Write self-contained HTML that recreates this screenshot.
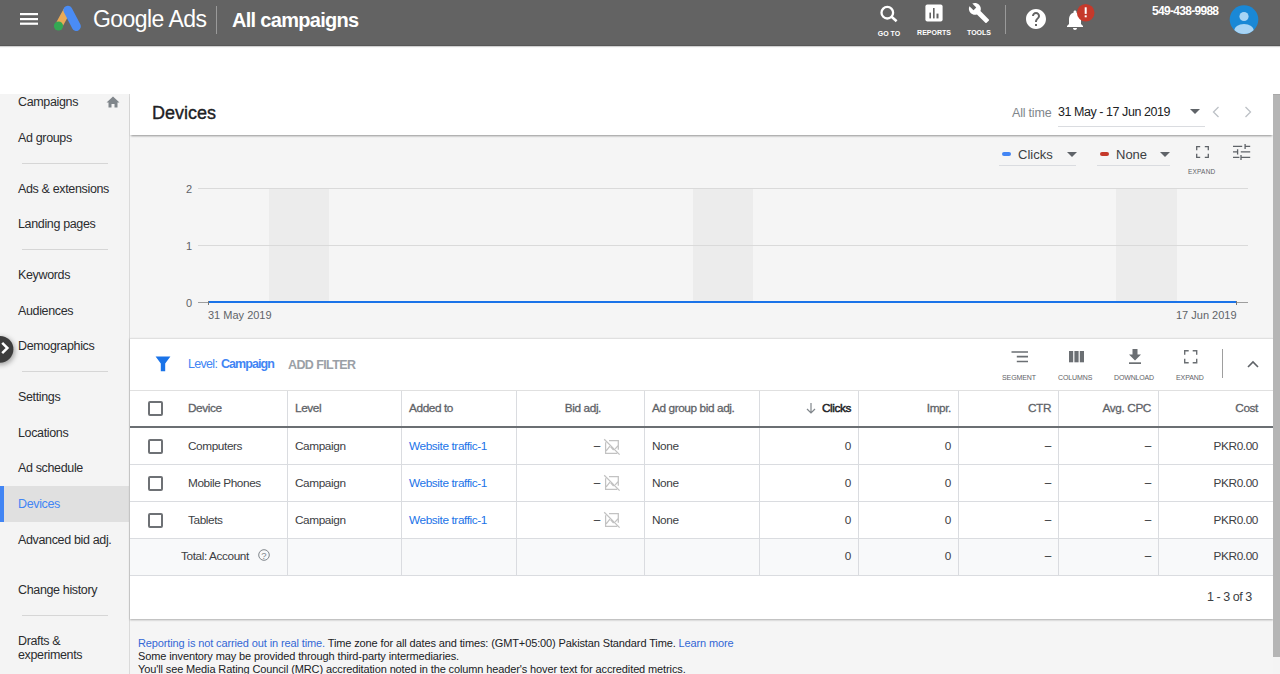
<!DOCTYPE html>
<html><head><meta charset="utf-8">
<style>
*{box-sizing:border-box;margin:0;padding:0}
html,body{width:1280px;height:674px;overflow:hidden;background:#fff;font-family:"Liberation Sans",sans-serif;color:#202124}
.abs{position:absolute}
#top{position:absolute;left:0;top:0;width:1280px;height:46px;background:#636363;color:#fff;border-bottom:1px solid #575757;box-shadow:0 1px 1px rgba(0,0,0,.18);z-index:2}
#side{position:absolute;left:0;top:94px;width:130px;height:580px;background:#f4f4f4;border-right:1px solid #dadada;overflow:hidden}
.nav{position:absolute;left:18px;font-size:12.5px;letter-spacing:-0.35px;color:#2b2c2f;white-space:nowrap}
.sep{position:absolute;left:22px;width:86px;height:1px;background:#d6d6d6}
#main{position:absolute;left:130px;top:94px;width:1143px;height:580px;background:#f4f4f4;overflow:hidden}
#scroll{position:absolute;left:1273px;top:94px;width:7px;height:563px;background:#b5b5b5;border-top:1px solid #a9a9a9}
</style></head><body>
<div id="top">
  <svg class="abs" style="left:20px;top:12px" width="18" height="14" viewBox="0 0 18 14"><rect x="0" y="1" width="18" height="2.2" fill="#fff"/><rect x="0" y="6" width="18" height="2.2" fill="#fff"/><rect x="0" y="10.6" width="18" height="2.2" fill="#fff"/></svg>
  <svg class="abs" style="left:52px;top:5px" width="30" height="27" viewBox="0 0 30 27">
    <line x1="14.8" y1="6" x2="7" y2="20.3" stroke="#e8aa58" stroke-width="7.6" stroke-linecap="round"/>
    <line x1="15.9" y1="5.2" x2="24.3" y2="21.4" stroke="#4a8cf5" stroke-width="9" stroke-linecap="round"/>
    <circle cx="6.5" cy="21" r="4.6" fill="#34a853"/>
  </svg>
  <div class="abs" style="left:93px;top:6px;font-size:23px;color:#fff;letter-spacing:-0.55px">Google Ads</div>
  <div class="abs" style="left:216px;top:6px;width:1px;height:28px;background:#9a9a9a"></div>
  <div class="abs" style="left:232px;top:8.7px;font-size:20px;font-weight:bold;color:#fff;letter-spacing:-0.7px">All campaigns</div>
  <svg class="abs" style="left:878px;top:3px" width="22" height="21" viewBox="0 0 22 21"><circle cx="9.3" cy="9.7" r="5.8" stroke="#fff" stroke-width="2.3" fill="none"/><path d="M13.3 13.6L18.6 18.2" stroke="#fff" stroke-width="2.6"/></svg>
  <div class="abs" style="left:876px;top:30px;width:26px;text-align:center;font-size:7px;font-weight:bold;color:#fff">GO TO</div>
  <svg class="abs" style="left:925px;top:4px" width="18" height="18" viewBox="0 0 18 18"><rect x="0.4" y="0.6" width="17.2" height="16.8" rx="2" fill="#fff"/><rect x="4.4" y="8.6" width="1.6" height="5.8" fill="#636363"/><rect x="8" y="4" width="1.6" height="10.4" fill="#636363"/><rect x="11.5" y="9.6" width="2" height="4.8" fill="#636363"/></svg>
  <div class="abs" style="left:914px;top:29px;width:40px;text-align:center;font-size:7px;font-weight:bold;color:#fff">REPORTS</div>
  <svg class="abs" style="left:968px;top:1.5px" width="22" height="22" viewBox="0 0 24 24"><path d="M22.7 19l-9.1-9.1c.9-2.3.4-5-1.5-6.9-2-2-5-2.4-7.4-1.3L9 6 6 9 1.6 4.7C.4 7.1.9 10.1 2.9 12.1c1.9 1.9 4.6 2.4 6.9 1.5l9.1 9.1c.4.4 1 .4 1.4 0l2.3-2.3c.5-.4.5-1.1.1-1.4z" fill="#fff"/></svg>
  <div class="abs" style="left:961px;top:29px;width:36px;text-align:center;font-size:7px;font-weight:bold;color:#fff">TOOLS</div>
  <div class="abs" style="left:1005px;top:5px;width:1px;height:29px;background:#9a9a9a"></div>
  <svg class="abs" style="left:1024px;top:6.7px" width="24" height="24" viewBox="0 0 24 24"><path d="M12 2C6.48 2 2 6.48 2 12s4.48 10 10 10 10-4.48 10-10S17.52 2 12 2zm1 17h-2v-2h2v2zm2.07-7.75l-.9.92C13.45 12.9 13 13.5 13 15h-2v-.5c0-1.1.45-2.1 1.17-2.83l1.24-1.26c.37-.36.59-.86.59-1.41 0-1.1-.9-2-2-2s-2 .9-2 2H8c0-2.21 1.79-4 4-4s4 1.79 4 4c0 .88-.36 1.68-.93 2.25z" fill="#fff"/></svg>
  <svg class="abs" style="left:1063px;top:7.5px" width="24" height="24" viewBox="0 0 24 24"><path d="M12 22c1.1 0 2-.9 2-2h-4c0 1.1.89 2 2 2zm6-6v-5c0-3.07-1.64-5.64-4.5-6.32V4c0-.83-.67-1.5-1.5-1.5s-1.5.67-1.5 1.5v.68C7.63 5.36 6 7.92 6 11v5l-2 2v1h16v-1l-2-2z" fill="#fff"/></svg>
  <svg class="abs" style="left:1076px;top:3px" width="20" height="20" viewBox="0 0 20 20"><circle cx="9.7" cy="9.7" r="8.8" fill="#c5392b"/><rect x="8.7" y="4.3" width="2" height="6.6" fill="#fff"/><rect x="8.7" y="12.3" width="2" height="2" fill="#fff"/></svg>
  <div class="abs" style="left:1152px;top:4px;font-size:12px;font-weight:bold;color:#fff;letter-spacing:-0.7px">549-438-9988</div>
  <svg class="abs" style="left:1229px;top:5px" width="30" height="30" viewBox="0 0 30 30"><defs><clipPath id="av"><circle cx="15" cy="14.6" r="14.3"/></clipPath></defs><circle cx="15" cy="14.6" r="14.3" fill="#1a88d6"/><g clip-path="url(#av)"><circle cx="15" cy="11.5" r="4.6" fill="#a8d4f5"/><ellipse cx="15" cy="26" rx="10" ry="7" fill="#a8d4f5"/></g></svg>
</div>

<div id="side">
  <div class="nav" style="top:1px">Campaigns</div>
  <svg class="abs" style="left:106px;top:2px" width="14" height="12" viewBox="0 0 14 12"><path d="M7 0.5L0.5 6.5H2.5V11.5H5.5V8H8.5V11.5H11.5V6.5H13.5Z" fill="#80868b"/></svg>
  <div class="nav" style="top:37px">Ad groups</div>
  <div class="sep" style="top:69px"></div>
  <div class="nav" style="top:88px">Ads &amp; extensions</div>
  <div class="nav" style="top:123px">Landing pages</div>
  <div class="sep" style="top:155px"></div>
  <div class="nav" style="top:174px">Keywords</div>
  <div class="nav" style="top:210px">Audiences</div>
  <div class="nav" style="top:245px">Demographics</div>
  <div class="sep" style="top:277px"></div>
  <div class="nav" style="top:296px">Settings</div>
  <div class="nav" style="top:332px">Locations</div>
  <div class="nav" style="top:367px">Ad schedule</div>
  <div class="abs" style="left:0;top:392px;width:129px;height:36px;background:#e0e0e0"></div>
  <div class="abs" style="left:0;top:392px;width:4px;height:36px;background:#4285f4"></div>
  <div class="nav" style="top:403px;color:#4285f4">Devices</div>
  <div class="nav" style="top:439px">Advanced bid adj.</div>
  <div class="nav" style="top:489px">Change history</div>
  <div class="sep" style="top:521px"></div>
  <div class="nav" style="top:540px;line-height:14px">Drafts &amp;<br>experiments</div>
</div>

<!-- header -->
<div class="abs" style="left:130px;top:94px;width:1143px;height:580px;background:#f5f5f5"></div>
<div class="abs" style="left:130px;top:94px;width:1143px;height:41px;background:#fff;box-shadow:0 2px 2px -1px rgba(0,0,0,.4)"></div>
<div class="abs" style="left:152px;top:103px;font-size:18px;color:#202124;-webkit-text-stroke:0.35px #202124">Devices</div>
<div class="abs" style="left:1012px;top:105.5px;font-size:12.5px;letter-spacing:-0.2px;color:#80868b">All time</div>
<div class="abs" style="left:1058px;top:105px;font-size:12.5px;letter-spacing:-0.45px;color:#202124">31 May - 17 Jun 2019</div>
<div class="abs" style="left:1058px;top:126px;width:147px;height:1px;background:#dadce0"></div>
<svg class="abs" style="left:1190px;top:109px" width="10" height="5"><path d="M0 0L10 0L5 5Z" fill="#5f6368"/></svg>
<svg class="abs" style="left:1212px;top:106px" width="8" height="12"><path d="M6.5 1L1.5 6L6.5 11" stroke="#bdc1c6" stroke-width="1.3" fill="none"/></svg>
<svg class="abs" style="left:1244px;top:106px" width="8" height="12"><path d="M1.5 1L6.5 6L1.5 11" stroke="#bdc1c6" stroke-width="1.3" fill="none"/></svg>

<!-- chart controls -->
<div class="abs" style="left:1002px;top:152px;width:9px;height:4px;border-radius:2px;background:#4285f4"></div>
<div class="abs" style="left:1018px;top:147px;font-size:13px;color:#3c4043">Clicks</div>
<svg class="abs" style="left:1067px;top:152px" width="10" height="5"><path d="M0 0L10 0L5 5Z" fill="#5f6368"/></svg>
<div class="abs" style="left:999px;top:165px;width:77px;height:1px;background:#dadce0"></div>
<div class="abs" style="left:1100px;top:152px;width:9px;height:4px;border-radius:2px;background:#c5392b"></div>
<div class="abs" style="left:1116px;top:147px;font-size:13px;color:#3c4043">None</div>
<svg class="abs" style="left:1160px;top:152px" width="10" height="5"><path d="M0 0L10 0L5 5Z" fill="#5f6368"/></svg>
<div class="abs" style="left:1097px;top:165px;width:73px;height:1px;background:#dadce0"></div>
<svg class="abs" style="left:1196px;top:146px" width="13" height="12" viewBox="0 0 13 12"><path d="M0.7 4.2V0.7H4.2M8.8 0.7H12.3V4.2M12.3 7.8V11.3H8.8M4.2 11.3H0.7V7.8" stroke="#5f6368" stroke-width="1.3" fill="none"/></svg>
<div class="abs" style="left:1188px;top:168px;font-size:6.5px;color:#5f6368;letter-spacing:.2px">EXPAND</div>
<svg class="abs" style="left:1233px;top:144px" width="18" height="17" viewBox="0 0 18 17"><path d="M0 2.4H9.2M11.5 2.4H17.2M0 7.9H5.2M7.8 7.9H17.2M0 13.4H6.4M8.6 13.4H17.2M12.1 0V5M4.6 5.2V10.6M8 11V16" stroke="#5f6368" stroke-width="1.3" fill="none"/></svg>

<!-- chart -->
<div class="abs" style="left:269px;top:189px;width:60px;height:112px;background:#ececec"></div>
<div class="abs" style="left:693px;top:189px;width:60px;height:112px;background:#ececec"></div>
<div class="abs" style="left:1116px;top:189px;width:61px;height:112px;background:#ececec"></div>
<div class="abs" style="left:198px;top:188px;width:1050px;height:1px;background:#dadada"></div>
<div class="abs" style="left:198px;top:245px;width:1050px;height:1px;background:#dadada"></div>
<div class="abs" style="left:198px;top:302px;width:1050px;height:1px;background:#9e9e9e"></div>
<div class="abs" style="left:208px;top:301px;width:1029px;height:2px;background:#1a73e8"></div>
<div class="abs" style="left:208px;top:301px;width:1px;height:4px;background:#777"></div>
<div class="abs" style="left:1236px;top:301px;width:1px;height:4px;background:#777"></div>
<div class="abs" style="left:186px;top:183px;font-size:11px;color:#5f6368">2</div>
<div class="abs" style="left:186px;top:240px;font-size:11px;color:#5f6368">1</div>
<div class="abs" style="left:186px;top:297px;font-size:11px;color:#5f6368">0</div>
<div class="abs" style="left:208px;top:309px;font-size:11px;color:#5f6368">31 May 2019</div>
<div class="abs" style="left:1176px;top:309px;font-size:11px;color:#5f6368">17 Jun 2019</div>

<!-- table card -->
<div class="abs" style="left:130px;top:338px;width:1143px;height:281px;background:#fff;border-top:1px solid #e0e0e0;box-shadow:0 1px 2px rgba(0,0,0,.3)"></div>
<svg class="abs" style="left:155px;top:356px" width="16" height="16" viewBox="0 0 16 16"><path d="M0.6 0.6H15.4L10.2 7.6V15.2H5.8V7.6Z" fill="#1a73e8"/></svg>
<div class="abs" style="left:188px;top:357px;font-size:12.5px;letter-spacing:-0.7px;color:#4285f4">Level:</div>
<div class="abs" style="left:221px;top:357px;font-size:12.5px;letter-spacing:-0.95px;font-weight:bold;color:#4285f4">Campaign</div>
<div class="abs" style="left:288px;top:358px;font-size:12.5px;letter-spacing:-0.6px;color:#9aa0a6;font-weight:bold">ADD FILTER</div>
<svg class="abs" style="left:1011px;top:350px" width="18" height="14" viewBox="0 0 18 14"><path d="M0.5 2H17M5.8 6.7H17M5.8 11.5H17" stroke="#6b6f73" stroke-width="1.7" fill="none"/></svg>
<div class="abs" style="left:1002px;top:374px;font-size:7px;letter-spacing:-0.1px;color:#5f6368">SEGMENT</div>
<svg class="abs" style="left:1069px;top:350px" width="16" height="13" viewBox="0 0 16 13"><rect x="0" y="1" width="4.2" height="11.3" fill="#6b6f73"/><rect x="5.4" y="1" width="4.2" height="11.3" fill="#6b6f73"/><rect x="10.8" y="1" width="4.2" height="11.3" fill="#6b6f73"/></svg>
<div class="abs" style="left:1058px;top:374px;font-size:7px;letter-spacing:-0.1px;color:#5f6368">COLUMNS</div>
<svg class="abs" style="left:1128px;top:348px" width="14" height="17" viewBox="0 0 14 17"><path d="M4.5 1H9.5V6.5H13L7 12.6L1 6.5H4.5Z" fill="#6b6f73"/><rect x="1" y="14.3" width="12" height="1.7" fill="#6b6f73"/></svg>
<div class="abs" style="left:1114px;top:374px;font-size:7px;letter-spacing:-0.15px;color:#5f6368">DOWNLOAD</div>
<svg class="abs" style="left:1184px;top:350px" width="14" height="14" viewBox="0 0 14 14"><path d="M0.7 4.7V0.7H4.7M8.7 0.7H12.7V4.7M12.7 8.7V12.7H8.7M4.7 12.7H0.7V8.7" stroke="#6b6f73" stroke-width="1.4" fill="none"/></svg>
<div class="abs" style="left:1176px;top:374px;font-size:7px;letter-spacing:-0.1px;color:#5f6368">EXPAND</div>

<div class="abs" style="left:1222px;top:349px;width:1px;height:29px;background:#9e9e9e"></div>
<svg class="abs" style="left:1246.5px;top:359.5px" width="12" height="8"><path d="M1 7L6 2L11 7" stroke="#5f6368" stroke-width="1.6" fill="none"/></svg>

<div id="tbl">
<div class="abs" style="left:130px;top:390px;width:1143px;height:1px;background:#e0e0e0"></div>
<div class="abs" style="left:130px;top:426px;width:1143px;height:2px;background:#6b6f73"></div>
<div class="abs" style="left:130px;top:539px;width:1143px;height:36px;background:#f8f9fa"></div>
<div class="abs" style="left:130px;top:464px;width:1143px;height:1px;background:#dadce0"></div>
<div class="abs" style="left:130px;top:501px;width:1143px;height:1px;background:#dadce0"></div>
<div class="abs" style="left:130px;top:538px;width:1143px;height:1px;background:#dadce0"></div>
<div class="abs" style="left:130px;top:575px;width:1143px;height:1px;background:#dadce0"></div>
<div class="abs" style="left:287px;top:391px;width:1px;height:35px;background:#dadce0"></div>
<div class="abs" style="left:287px;top:428px;width:1px;height:147px;background:#dadce0"></div>
<div class="abs" style="left:401px;top:391px;width:1px;height:35px;background:#dadce0"></div>
<div class="abs" style="left:401px;top:428px;width:1px;height:147px;background:#dadce0"></div>
<div class="abs" style="left:516px;top:391px;width:1px;height:35px;background:#dadce0"></div>
<div class="abs" style="left:516px;top:428px;width:1px;height:147px;background:#dadce0"></div>
<div class="abs" style="left:644px;top:391px;width:1px;height:35px;background:#dadce0"></div>
<div class="abs" style="left:644px;top:428px;width:1px;height:147px;background:#dadce0"></div>
<div class="abs" style="left:759px;top:391px;width:1px;height:35px;background:#dadce0"></div>
<div class="abs" style="left:759px;top:428px;width:1px;height:147px;background:#dadce0"></div>
<div class="abs" style="left:858px;top:391px;width:1px;height:35px;background:#dadce0"></div>
<div class="abs" style="left:858px;top:428px;width:1px;height:147px;background:#dadce0"></div>
<div class="abs" style="left:958px;top:391px;width:1px;height:35px;background:#dadce0"></div>
<div class="abs" style="left:958px;top:428px;width:1px;height:147px;background:#dadce0"></div>
<div class="abs" style="left:1058px;top:391px;width:1px;height:35px;background:#dadce0"></div>
<div class="abs" style="left:1058px;top:428px;width:1px;height:147px;background:#dadce0"></div>
<div class="abs" style="left:1158px;top:391px;width:1px;height:35px;background:#dadce0"></div>
<div class="abs" style="left:1158px;top:428px;width:1px;height:147px;background:#dadce0"></div>
<div class="abs" style="left:148px;top:401px;width:15px;height:15px;border:2px solid #6e7175;border-radius:2px"></div>
<div class="abs" style="left:148px;top:439px;width:15px;height:15px;border:2px solid #6e7175;border-radius:2px"></div>
<div class="abs" style="left:148px;top:476px;width:15px;height:15px;border:2px solid #6e7175;border-radius:2px"></div>
<div class="abs" style="left:148px;top:513px;width:15px;height:15px;border:2px solid #6e7175;border-radius:2px"></div>
<div class="abs" style="left:188px;top:401px;font-size:11.8px;letter-spacing:-0.4px;white-space:nowrap;color:#5f6368;-webkit-text-stroke:0.3px #5f6368">Device</div>
<div class="abs" style="left:295px;top:401px;font-size:11.8px;letter-spacing:-0.4px;white-space:nowrap;color:#5f6368;-webkit-text-stroke:0.3px #5f6368">Level</div>
<div class="abs" style="left:409px;top:401px;font-size:11.8px;letter-spacing:-0.4px;white-space:nowrap;color:#5f6368;-webkit-text-stroke:0.3px #5f6368">Added to</div>
<div class="abs" style="right:679px;top:401px;font-size:11.8px;letter-spacing:-0.4px;white-space:nowrap;color:#5f6368;-webkit-text-stroke:0.3px #5f6368">Bid adj.</div>
<div class="abs" style="left:652px;top:401px;font-size:11.8px;letter-spacing:-0.4px;white-space:nowrap;color:#5f6368;-webkit-text-stroke:0.3px #5f6368">Ad group bid adj.</div>
<div class="abs" style="right:429px;top:401px;font-size:11.8px;letter-spacing:-0.4px;white-space:nowrap;color:#202124;-webkit-text-stroke:0.45px #202124">Clicks</div>
<svg class="abs" style="left:806px;top:403px" width="10" height="11" viewBox="0 0 10 11"><path d="M5 0V10M1 6L5 10L9 6" stroke="#80868b" stroke-width="1.2" fill="none"/></svg>
<div class="abs" style="right:329px;top:401px;font-size:11.8px;letter-spacing:-0.4px;white-space:nowrap;color:#5f6368;-webkit-text-stroke:0.3px #5f6368">Impr.</div>
<div class="abs" style="right:229px;top:401px;font-size:11.8px;letter-spacing:-0.4px;white-space:nowrap;color:#5f6368;-webkit-text-stroke:0.3px #5f6368">CTR</div>
<div class="abs" style="right:129px;top:401px;font-size:11.8px;letter-spacing:-0.4px;white-space:nowrap;color:#5f6368;-webkit-text-stroke:0.3px #5f6368">Avg. CPC</div>
<div class="abs" style="right:22px;top:401px;font-size:11.8px;letter-spacing:-0.4px;white-space:nowrap;color:#5f6368;-webkit-text-stroke:0.3px #5f6368">Cost</div>
<div class="abs" style="left:188px;top:439px;font-size:11.8px;letter-spacing:-0.4px;white-space:nowrap;color:#3c4043">Computers</div>
<div class="abs" style="left:295px;top:439px;font-size:11.8px;letter-spacing:-0.4px;white-space:nowrap;color:#3c4043">Campaign</div>
<div class="abs" style="left:409px;top:439px;font-size:11.8px;letter-spacing:-0.4px;white-space:nowrap;color:#1a73e8">Website traffic-1</div>
<div class="abs" style="right:680px;top:438px;font-size:11.8px;letter-spacing:-0.4px;white-space:nowrap;color:#202124">&ndash;</div>
<svg class="abs" style="left:603px;top:437.5px" width="18" height="18" viewBox="0 0 18 18"><path d="M2.6 4.2V15.3H14.2M6 2.5H15.3V11.8M1.2 1.2L16.6 16.6M3.2 12.8L6.9 8.2M7.5 8.6L10.6 12.2M12.2 10.8L15.3 7.4" stroke="#c2c2c2" stroke-width="1.25" fill="none"/></svg>
<div class="abs" style="left:652px;top:439px;font-size:11.8px;letter-spacing:-0.4px;white-space:nowrap;color:#3c4043">None</div>
<div class="abs" style="left:188px;top:475.5px;font-size:11.8px;letter-spacing:-0.4px;white-space:nowrap;color:#3c4043">Mobile Phones</div>
<div class="abs" style="left:295px;top:475.5px;font-size:11.8px;letter-spacing:-0.4px;white-space:nowrap;color:#3c4043">Campaign</div>
<div class="abs" style="left:409px;top:475.5px;font-size:11.8px;letter-spacing:-0.4px;white-space:nowrap;color:#1a73e8">Website traffic-1</div>
<div class="abs" style="right:680px;top:474.5px;font-size:11.8px;letter-spacing:-0.4px;white-space:nowrap;color:#202124">&ndash;</div>
<svg class="abs" style="left:603px;top:474.0px" width="18" height="18" viewBox="0 0 18 18"><path d="M2.6 4.2V15.3H14.2M6 2.5H15.3V11.8M1.2 1.2L16.6 16.6M3.2 12.8L6.9 8.2M7.5 8.6L10.6 12.2M12.2 10.8L15.3 7.4" stroke="#c2c2c2" stroke-width="1.25" fill="none"/></svg>
<div class="abs" style="left:652px;top:475.5px;font-size:11.8px;letter-spacing:-0.4px;white-space:nowrap;color:#3c4043">None</div>
<div class="abs" style="left:188px;top:512.5px;font-size:11.8px;letter-spacing:-0.4px;white-space:nowrap;color:#3c4043">Tablets</div>
<div class="abs" style="left:295px;top:512.5px;font-size:11.8px;letter-spacing:-0.4px;white-space:nowrap;color:#3c4043">Campaign</div>
<div class="abs" style="left:409px;top:512.5px;font-size:11.8px;letter-spacing:-0.4px;white-space:nowrap;color:#1a73e8">Website traffic-1</div>
<div class="abs" style="right:680px;top:511.5px;font-size:11.8px;letter-spacing:-0.4px;white-space:nowrap;color:#202124">&ndash;</div>
<svg class="abs" style="left:603px;top:511.0px" width="18" height="18" viewBox="0 0 18 18"><path d="M2.6 4.2V15.3H14.2M6 2.5H15.3V11.8M1.2 1.2L16.6 16.6M3.2 12.8L6.9 8.2M7.5 8.6L10.6 12.2M12.2 10.8L15.3 7.4" stroke="#c2c2c2" stroke-width="1.25" fill="none"/></svg>
<div class="abs" style="left:652px;top:512.5px;font-size:11.8px;letter-spacing:-0.4px;white-space:nowrap;color:#3c4043">None</div>
<div class="abs" style="right:429px;top:439px;font-size:11.8px;letter-spacing:-0.4px;white-space:nowrap;color:#3c4043">0</div>
<div class="abs" style="right:329px;top:439px;font-size:11.8px;letter-spacing:-0.4px;white-space:nowrap;color:#3c4043">0</div>
<div class="abs" style="right:229px;top:438px;font-size:11.8px;letter-spacing:-0.4px;white-space:nowrap;color:#202124">&ndash;</div>
<div class="abs" style="right:129px;top:438px;font-size:11.8px;letter-spacing:-0.4px;white-space:nowrap;color:#202124">&ndash;</div>
<div class="abs" style="right:22px;top:439px;font-size:11.8px;letter-spacing:-0.4px;white-space:nowrap;color:#3c4043">PKR0.00</div>
<div class="abs" style="right:429px;top:475.5px;font-size:11.8px;letter-spacing:-0.4px;white-space:nowrap;color:#3c4043">0</div>
<div class="abs" style="right:329px;top:475.5px;font-size:11.8px;letter-spacing:-0.4px;white-space:nowrap;color:#3c4043">0</div>
<div class="abs" style="right:229px;top:474.5px;font-size:11.8px;letter-spacing:-0.4px;white-space:nowrap;color:#202124">&ndash;</div>
<div class="abs" style="right:129px;top:474.5px;font-size:11.8px;letter-spacing:-0.4px;white-space:nowrap;color:#202124">&ndash;</div>
<div class="abs" style="right:22px;top:475.5px;font-size:11.8px;letter-spacing:-0.4px;white-space:nowrap;color:#3c4043">PKR0.00</div>
<div class="abs" style="right:429px;top:512.5px;font-size:11.8px;letter-spacing:-0.4px;white-space:nowrap;color:#3c4043">0</div>
<div class="abs" style="right:329px;top:512.5px;font-size:11.8px;letter-spacing:-0.4px;white-space:nowrap;color:#3c4043">0</div>
<div class="abs" style="right:229px;top:511.5px;font-size:11.8px;letter-spacing:-0.4px;white-space:nowrap;color:#202124">&ndash;</div>
<div class="abs" style="right:129px;top:511.5px;font-size:11.8px;letter-spacing:-0.4px;white-space:nowrap;color:#202124">&ndash;</div>
<div class="abs" style="right:22px;top:512.5px;font-size:11.8px;letter-spacing:-0.4px;white-space:nowrap;color:#3c4043">PKR0.00</div>
<div class="abs" style="right:429px;top:549px;font-size:11.8px;letter-spacing:-0.4px;white-space:nowrap;color:#3c4043">0</div>
<div class="abs" style="right:329px;top:549px;font-size:11.8px;letter-spacing:-0.4px;white-space:nowrap;color:#3c4043">0</div>
<div class="abs" style="right:229px;top:548px;font-size:11.8px;letter-spacing:-0.4px;white-space:nowrap;color:#202124">&ndash;</div>
<div class="abs" style="right:129px;top:548px;font-size:11.8px;letter-spacing:-0.4px;white-space:nowrap;color:#202124">&ndash;</div>
<div class="abs" style="right:22px;top:549px;font-size:11.8px;letter-spacing:-0.4px;white-space:nowrap;color:#3c4043">PKR0.00</div>
<div class="abs" style="left:181px;top:549px;font-size:11.8px;letter-spacing:-0.4px;white-space:nowrap;color:#3c4043">Total: Account</div>
<svg class="abs" style="left:258px;top:549px" width="12" height="12" viewBox="0 0 12 12"><circle cx="6" cy="6" r="5.3" stroke="#80868b" stroke-width="1" fill="none"/><text x="6" y="9.6" font-size="9.5" text-anchor="middle" fill="#80868b" font-family="Liberation Sans">?</text></svg>
</div>

<div class="abs" style="left:1207px;top:590px;font-size:12.5px;letter-spacing:-0.45px;color:#3c4043">1 - 3 of 3</div>

<!-- footer -->
<div class="abs" style="left:138px;top:637px;font-size:11px;letter-spacing:-0.12px;color:#202124;line-height:13px;white-space:nowrap"><span style="color:#3367d6">Reporting is not carried out in real time.</span> Time zone for all dates and times: (GMT+05:00) Pakistan Standard Time. <span style="color:#3367d6">Learn more</span><br>Some inventory may be provided through third-party intermediaries.<br>You'll see Media Rating Council (MRC) accreditation noted in the column header's hover text for accredited metrics.</div>

<div class="abs" style="left:1273px;top:94px;width:7px;height:580px;background:#f4f4f4"></div>
<div id="scroll"></div>
<svg class="abs" style="left:0;top:327px" width="26" height="46" viewBox="0 0 26 46"><defs><filter id="sh" x="-50%" y="-50%" width="200%" height="200%"><feGaussianBlur stdDeviation="2.6"/></filter></defs><circle cx="1" cy="24" r="14" fill="rgba(0,0,0,.32)" filter="url(#sh)"/><circle cx="0" cy="22.3" r="13.4" fill="#3d3d3d"/><path d="M2.2 15.8L7.4 21L2.2 26.2" stroke="#fff" stroke-width="2.5" fill="none"/></svg>
</body></html>
